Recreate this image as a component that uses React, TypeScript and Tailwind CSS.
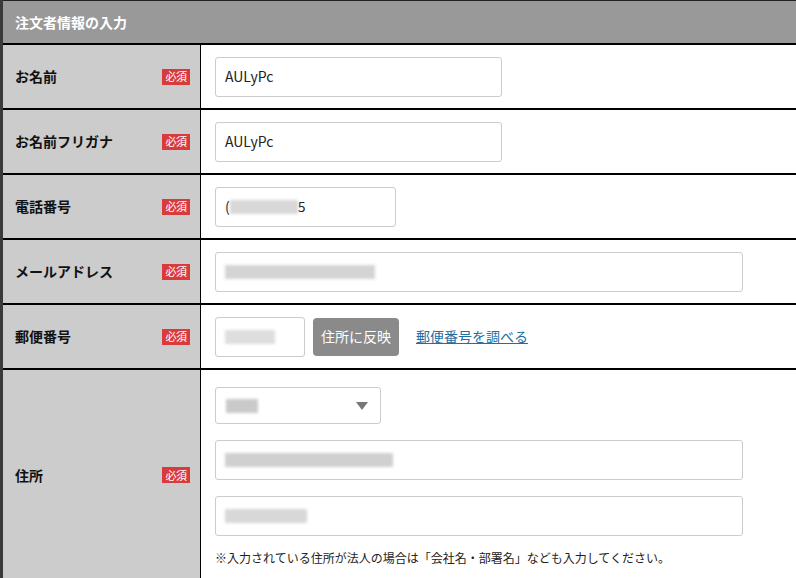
import React from "react";

const font = { fontFamily: '"Noto Sans CJK JP", "Noto Sans", sans-serif' };

function Badge() {
  return (
    <span className="inline-flex items-center justify-center bg-[#d93a3c] text-white text-[11px] leading-none h-[16px] w-[28px] tracking-[-0.5px]">
      必須
    </span>
  );
}

function Label({ text }: { text: string }) {
  return (
    <div className="w-[198px] shrink-0 bg-[#cccccc] border-r border-black flex items-center justify-between pl-[12px] pr-[10px]">
      <span className="font-bold text-[14px] text-[#111]">{text}</span>
      <Badge />
    </div>
  );
}

function Blur({ w, shade = "#cfcfcf" }: { w: number; shade?: string }) {
  return (
    <span
      className="inline-block h-[14px] blur-[1.5px] align-middle"
      style={{ width: w, background: shade }}
    />
  );
}

function Row({ label, children }: { label: string; children: React.ReactNode }) {
  return (
    <div className="flex border-t-2 border-black h-[65px]">
      <Label text={label} />
      <div className="flex-1 flex items-center pl-[14px] bg-white">{children}</div>
    </div>
  );
}

const inputCls =
  "h-[40px] border border-[#cccccc] rounded-[3px] bg-white flex items-center px-[9px] text-[14px] text-[#222]";

export default function App() {
  return (
    <div style={font} className="w-[796px] h-[578px] overflow-hidden bg-white">
      <div className="border-l-[3px] border-[#3a3a3a] h-full">
        <div className="h-[43px] bg-[#999999] border-t border-[#222] flex items-center pl-[12px]">
          <span className="text-white font-bold text-[14px]">注文者情報の入力</span>
        </div>
        <Row label="お名前">
          <div className={inputCls + " w-[287px]"}>AULyPc</div>
        </Row>
        <Row label="お名前フリガナ">
          <div className={inputCls + " w-[287px]"}>AULyPc</div>
        </Row>
        <Row label="電話番号">
          <div className={inputCls + " w-[181px] gap-0"}>
            <span>(</span>
            <Blur w={68} shade="#d8d8d8" />
            <span>5</span>
          </div>
        </Row>
        <Row label="メールアドレス">
          <div className={inputCls + " w-[528px]"}>
            <Blur w={150} shade="#d4d4d6" />
          </div>
        </Row>
        <Row label="郵便番号">
          <div className="flex items-center">
            <div className={inputCls + " w-[90px]"}>
              <Blur w={50} shade="#dedede" />
            </div>
            <button className="ml-[8px] h-[38px] w-[86px] rounded-[4px] bg-[#8a8a8a] text-white text-[14px] flex items-center justify-center">
              住所に反映
            </button>
            <a className="ml-[17px] text-[14px] text-[#1d6fa5] underline">郵便番号を調べる</a>
          </div>
        </Row>
        <div className="flex border-t-2 border-black h-[212px]">
          <Label text="住所" />
          <div className="flex-1 flex flex-col pl-[14px] pt-[17px] bg-white">
            <div className="h-[37px] w-[166px] border border-[#cccccc] rounded-[3px] flex items-center justify-between px-[10px]">
              <Blur w={32} shade="#cacaca" />
              <span className="w-0 h-0 border-l-[6px] border-r-[6px] border-t-[8px] border-l-transparent border-r-transparent border-t-[#777] mr-[2px]" />
            </div>
            <div className={inputCls + " w-[528px] mt-[16px]"}>
              <Blur w={168} shade="#d0d0d0" />
            </div>
            <div className={inputCls + " w-[528px] mt-[16px]"}>
              <Blur w={82} shade="#d8d8d8" />
            </div>
            <p className="mt-[13px] text-[12px] text-[#222]">
              ※入力されている住所が法人の場合は「会社名・部署名」なども入力してください。
            </p>
          </div>
        </div>
      </div>
    </div>
  );
}
